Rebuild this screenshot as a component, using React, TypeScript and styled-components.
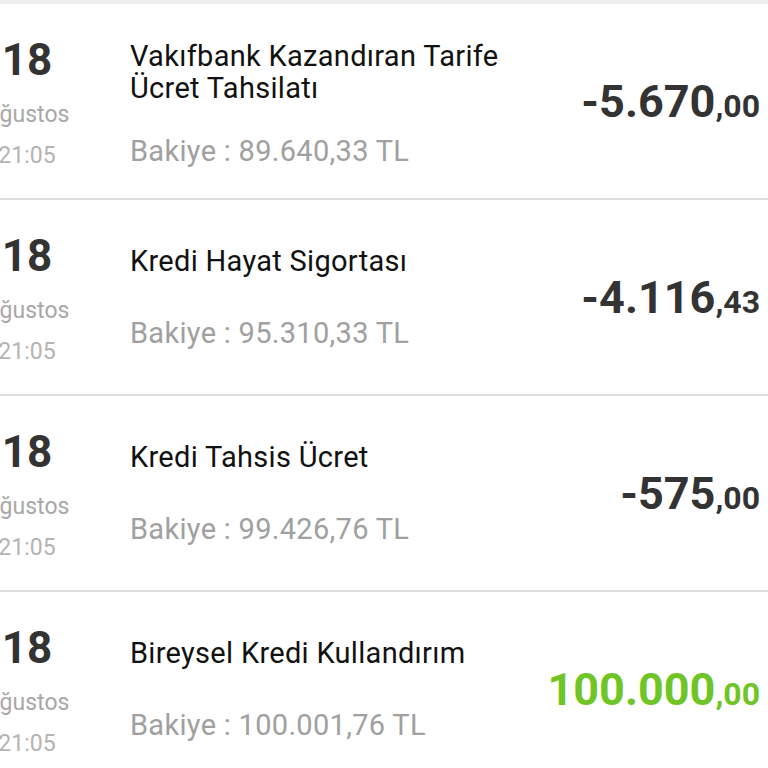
import styled, { createGlobalStyle } from 'styled-components';

const GlobalStyle = createGlobalStyle`
  html, body {
    margin: 0;
    padding: 0;
    background: #ffffff;
    overflow: hidden;
  }
  body {
    font-family: Roboto, "Noto Sans", "Liberation Sans", sans-serif;
  }
`;

const Screen = styled.div`
  width: 768px;
  height: 768px;
  overflow: hidden;
  background: #ffffff;
  border-top: 4px solid #eeeeee;
  box-sizing: border-box;
`;

const List = styled.ul`
  list-style: none;
  margin: 0;
  padding: 0;
`;

const Row = styled.li`
  height: 196px;
  box-sizing: border-box;
  display: flex;
  align-items: center;
  border-bottom: 2px solid #dddddd;
`;

const DateColumn = styled.div`
  width: 100px;
  margin-left: -23px;
  padding-top: 4px;
  flex-shrink: 0;
  display: flex;
  flex-direction: column;
  align-items: center;
  text-align: center;
`;

const Day = styled.span`
  font-size: 44px;
  line-height: 50px;
  font-weight: 700;
  color: #333333;
`;

const Month = styled.span`
  margin-top: 14px;
  font-size: 23px;
  line-height: 32px;
  color: #a8a8a8;
`;

const Time = styled.span`
  margin-top: 9px;
  font-size: 23px;
  line-height: 32px;
  color: #b4b4b4;
`;

const Details = styled.div<{ $multiline?: boolean }>`
  flex: 1;
  margin-left: 53px;
  padding-top: ${(p) => (p.$multiline ? '4px' : '0')};
  display: flex;
  flex-direction: column;
  gap: ${(p) => (p.$multiline ? '31px' : '40px')};
  letter-spacing: 0.3px;
`;

const Title = styled.div`
  font-size: 29px;
  line-height: 32px;
  color: #111111;
  white-space: pre-line;
`;

const Balance = styled.div`
  font-size: 29px;
  line-height: 32px;
  color: #a0a0a0;
`;

const Amount = styled.div<{ $positive?: boolean }>`
  margin-right: 8px;
  font-weight: 700;
  font-size: 45px;
  color: ${(p) => (p.$positive ? '#6fc526' : '#333333')};
  white-space: nowrap;
`;

const Cents = styled.span`
  font-size: 32px;
`;

interface Transaction {
  day: string;
  month: string;
  time: string;
  title: string;
  balance: string;
  amount: string;
  cents: string;
  positive?: boolean;
}

const transactions: Transaction[] = [
  {
    day: '18',
    month: 'Ağustos',
    time: '21:05',
    title: 'Vakıfbank Kazandıran Tarife\nÜcret Tahsilatı',
    balance: 'Bakiye : 89.640,33 TL',
    amount: '-5.670',
    cents: ',00',
  },
  {
    day: '18',
    month: 'Ağustos',
    time: '21:05',
    title: 'Kredi Hayat Sigortası',
    balance: 'Bakiye : 95.310,33 TL',
    amount: '-4.116',
    cents: ',43',
  },
  {
    day: '18',
    month: 'Ağustos',
    time: '21:05',
    title: 'Kredi Tahsis Ücret',
    balance: 'Bakiye : 99.426,76 TL',
    amount: '-575',
    cents: ',00',
  },
  {
    day: '18',
    month: 'Ağustos',
    time: '21:05',
    title: 'Bireysel Kredi Kullandırım',
    balance: 'Bakiye : 100.001,76 TL',
    amount: '100.000',
    cents: ',00',
    positive: true,
  },
];

const App: React.FC = () => {
  return (
    <>
      <GlobalStyle />
      <Screen>
        <List>
          {transactions.map((tx, index) => (
            <Row key={index}>
              <DateColumn>
                <Day>{tx.day}</Day>
                <Month>{tx.month}</Month>
                <Time>{tx.time}</Time>
              </DateColumn>
              <Details $multiline={tx.title.includes('\n')}>
                <Title>{tx.title}</Title>
                <Balance>{tx.balance}</Balance>
              </Details>
              <Amount $positive={tx.positive}>
                {tx.amount}
                <Cents>{tx.cents}</Cents>
              </Amount>
            </Row>
          ))}
        </List>
      </Screen>
    </>
  );
};

export default App;
